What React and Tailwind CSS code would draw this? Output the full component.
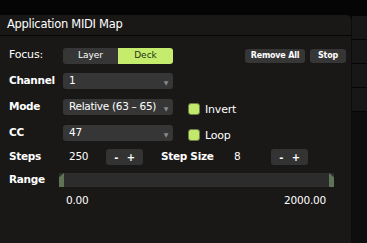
import React from "react";

function Select({ value }) {
  return (
    <div className="w-[110px] h-[16px] rounded-[3px] bg-[#363636] flex items-center justify-between pl-[6px] pr-[5px] text-white text-[10.5px] tracking-[-0.3px] whitespace-nowrap">
      <span>{value}</span>
      <span className="text-[#8a8a8a] text-[6px] leading-none mt-[3px]">▼</span>
    </div>
  );
}

function Check({ label }) {
  return (
    <div className="flex items-center gap-[5px] text-white text-[11px] tracking-[-0.2px]">
      <div className="w-[12px] h-[12px] rounded-[3px] bg-[#c2e96b] border border-[#6d7e47]" />
      <span className="mt-[2px]">{label}</span>
    </div>
  );
}

function PlusMinus() {
  return (
    <div className="w-[37px] h-[16px] rounded-[3px] bg-[#333333] flex items-center justify-around px-[4px] text-white text-[10px] font-bold">
      <span>-</span>
      <span>+</span>
    </div>
  );
}

export default function App() {
  return (
    <div
      className="w-[367px] h-[243px] bg-[#050505] flex overflow-hidden"
      style={{ fontFamily: "'DejaVu Sans', 'Liberation Sans', sans-serif" }}
    >
      <div className="w-[352px] flex flex-col pt-[15px]">
        <div className="flex-1 bg-[#191817] rounded-tr-[5px] border-r border-[#0c0c0c] flex flex-col">
          <div className="h-[21px] border-b border-[#050505] flex items-center pl-[7px] text-white text-[11.5px] tracking-[-0.3px]">
            Application MIDI Map
          </div>

          <div className="flex items-center h-[25px] mt-[7px] pl-[9px]">
            <div className="w-[54px] text-white text-[11px] tracking-[-0.2px]">Focus:</div>
            <div className="flex h-[16px] w-[110px] rounded-[3px] overflow-hidden text-[9px]">
              <div className="flex-1 bg-[#363636] text-white flex items-center justify-center">Layer</div>
              <div className="flex-1 bg-[#c5ec6c] text-[#2a3214] flex items-center justify-center">Deck</div>
            </div>
            <div className="ml-auto mr-[5px] flex gap-[5px] text-white text-[8px] font-bold tracking-[-0.2px] whitespace-nowrap">
              <div className="w-[60px] h-[14px] rounded-[3px] bg-[#363636] flex items-center justify-center">Remove All</div>
              <div className="w-[36px] h-[14px] rounded-[3px] bg-[#363636] flex items-center justify-center">Stop</div>
            </div>
          </div>

          <div className="flex items-center h-[26px] pl-[9px]">
            <div className="w-[54px] text-white text-[10.5px] font-bold tracking-[-0.3px]">Channel</div>
            <Select value="1" />
          </div>

          <div className="flex items-center h-[26px] pl-[9px]">
            <div className="w-[54px] text-white text-[10.5px] font-bold tracking-[-0.3px]">Mode</div>
            <Select value="Relative (63 – 65)" />
            <div className="ml-[15px] mt-[4px]">
              <Check label="Invert" />
            </div>
          </div>

          <div className="flex items-center h-[26px] pl-[9px]">
            <div className="w-[54px] text-white text-[10.5px] font-bold tracking-[-0.3px]">CC</div>
            <Select value="47" />
            <div className="ml-[15px] mt-[4px]">
              <Check label="Loop" />
            </div>
          </div>

          <div className="flex items-center h-[22px] pl-[9px] text-white text-[10.5px] tracking-[-0.3px]">
            <div className="w-[60px] font-bold">Steps</div>
            <div className="w-[37px]">250</div>
            <PlusMinus />
            <div className="w-[73px] font-bold ml-[18px]">Step Size</div>
            <div className="w-[37px]">8</div>
            <PlusMinus />
          </div>

          <div className="flex items-center h-[24px] pl-[9px] text-white text-[10.5px] tracking-[-0.3px]">
            <div className="w-[50px] font-bold">Range</div>
            <div className="relative w-[275px] h-[14px] bg-[#2c2c2c]">
              <div className="absolute left-0 top-0 w-[5px] h-[14px] bg-[#5f7355] [clip-path:polygon(0_30%,100%_0,100%_100%,0_100%)]" />
              <div className="absolute right-0 top-0 w-[5px] h-[14px] bg-[#5f7355] [clip-path:polygon(0_0,100%_30%,100%_100%,0_100%)]" />
            </div>
          </div>

          <div className="flex justify-between w-[260px] ml-[66px] mt-[1px] text-white text-[10.5px] tracking-[-0.2px]">
            <span>0.00</span>
            <span>2000.00</span>
          </div>
        </div>
      </div>

      <div className="flex-1 flex flex-col">
        <div className="h-[15px]" />
        <div className="h-[25px] bg-[#171717] border-y border-[#050505]" />
        <div className="h-[24px] bg-[#171717] border-b border-[#050505]" />
        <div className="h-[24px] bg-[#171717] border-b border-[#050505]" />
        <div className="h-[24px] bg-[#171717] border-b border-[#050505]" />
        <div className="flex-1 bg-[#0e0e0e]" />
      </div>
    </div>
  );
}
